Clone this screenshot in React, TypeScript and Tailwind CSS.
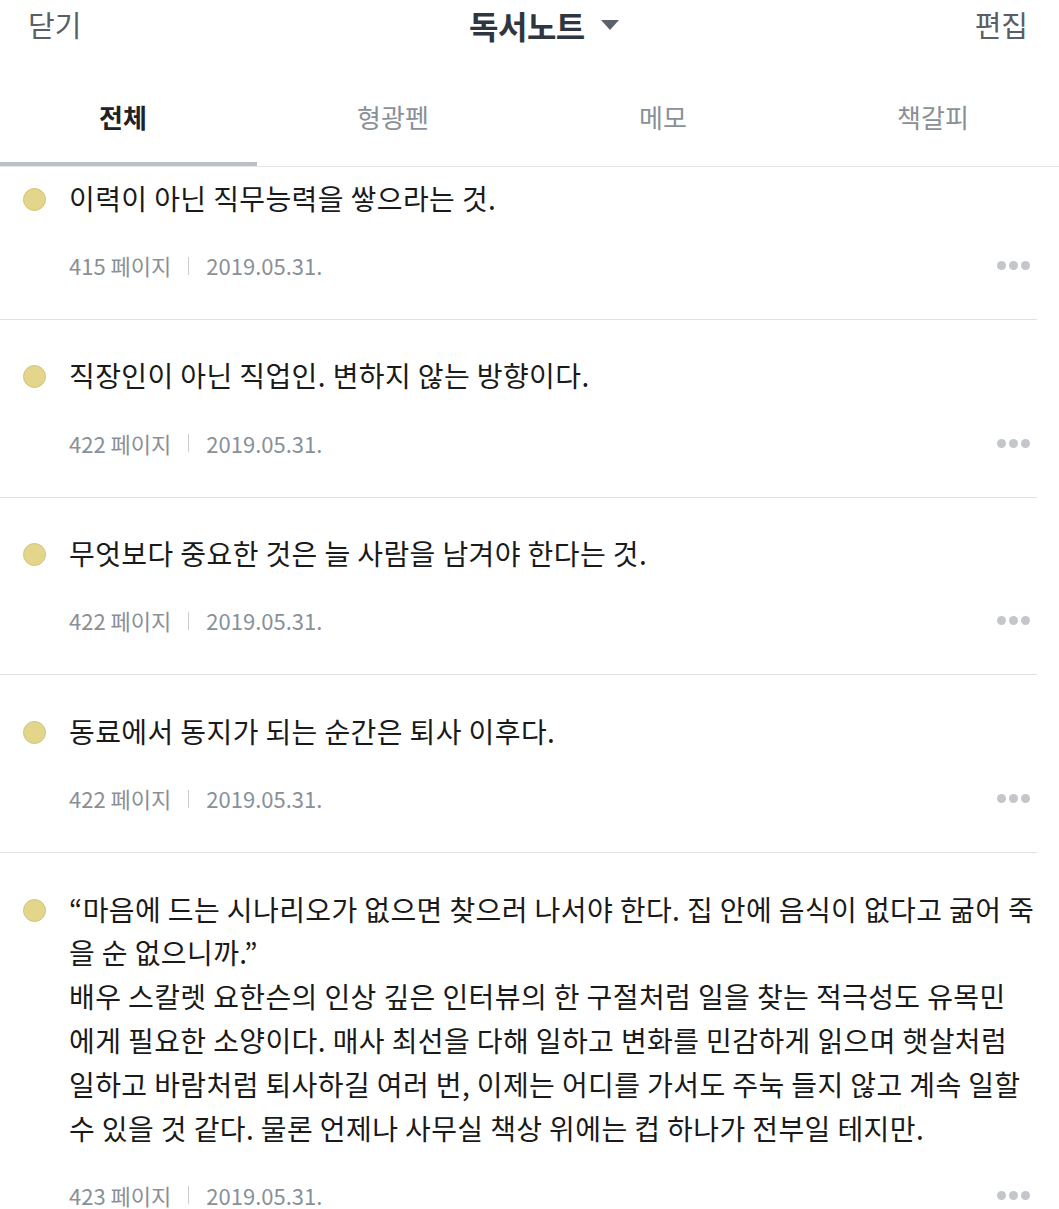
import React from 'react';

const FONT = { fontFamily: '"Noto Sans CJK KR", "Noto Sans", sans-serif' };

type Note = {
  id: number;
  lines: string[];
  page: number;
  date: string;
};

const notes: Note[] = [
  { id: 1, lines: ['이력이 아닌 직무능력을 쌓으라는 것.'], page: 415, date: '2019.05.31.' },
  { id: 2, lines: ['직장인이 아닌 직업인. 변하지 않는 방향이다.'], page: 422, date: '2019.05.31.' },
  { id: 3, lines: ['무엇보다 중요한 것은 늘 사람을 남겨야 한다는 것.'], page: 422, date: '2019.05.31.' },
  { id: 4, lines: ['동료에서 동지가 되는 순간은 퇴사 이후다.'], page: 422, date: '2019.05.31.' },
  {
    id: 5,
    lines: [
      '“마음에 드는 시나리오가 없으면 찾으러 나서야 한다. 집 안에 음식이 없다고 굶어 죽',
      '을 순 없으니까.”',
      '배우 스칼렛 요한슨의 인상 깊은 인터뷰의 한 구절처럼 일을 찾는 적극성도 유목민',
      '에게 필요한 소양이다. 매사 최선을 다해 일하고 변화를 민감하게 읽으며 햇살처럼',
      '일하고 바람처럼 퇴사하길 여러 번, 이제는 어디를 가서도 주눅 들지 않고 계속 일할',
      '수 있을 것 같다. 물론 언제나 사무실 책상 위에는 컵 하나가 전부일 테지만.',
    ],
    page: 423,
    date: '2019.05.31.',
  },
];

const tabs = ['전체', '형광펜', '메모', '책갈피'];

const NoteRow = ({ note, first, last }: { note: Note; first: boolean; last: boolean }) => (
  <div className={`${first ? 'pt-[10px] pb-[38px]' : 'pt-[34.5px] pb-[38.5px]'} ${last ? '' : 'border-b border-[#dde1e3]'} mr-[22px]`}>
    <div className="flex">
      <div className="w-[69px] shrink-0 flex justify-start pl-[23px] pt-[11px]">
        <span className="block w-[23px] h-[23px] rounded-full bg-[#e3d68a] border border-[#d3c472]" />
      </div>
      <div className="flex-1 text-[28px] leading-[43.8px] text-[#1a1a1a] whitespace-nowrap tracking-[0.4px]">
        {note.lines.map((l, i) => (
          <div key={i}>{l}</div>
        ))}
      </div>
    </div>
    <div className="flex items-center pl-[69px] mt-[30px] h-[30px] text-[22px] text-[#8a9097]">
      <span>{note.page} 페이지</span>
      <span className="mx-[17px] w-px h-[18px] bg-[#c9cdd1]" />
      <span>{note.date}</span>
      <span className="ml-auto flex gap-[3px] mr-[7px]">
        <span className="w-[9px] h-[9px] rounded-full bg-[#c3c7cb]" />
        <span className="w-[9px] h-[9px] rounded-full bg-[#c3c7cb]" />
        <span className="w-[9px] h-[9px] rounded-full bg-[#c3c7cb]" />
      </span>
    </div>
  </div>
);

const App = () => {
  return (
    <div className="w-[1059px] h-[1209px] bg-white overflow-hidden" style={FONT}>
      {/* Header */}
      <div className="relative flex items-center justify-between h-[50px] px-[28px]">
        <span className="text-[29px] text-[#5a5f65]">닫기</span>
        <div className="absolute left-[469px] top-0 h-full flex items-center">
          <span className="text-[32px] font-bold text-[#2e3640] tracking-[-0.5px]">독서노트</span>
        </div>
        <span className="absolute left-[601px] top-[20px] w-0 h-0 border-l-[9px] border-r-[9px] border-t-[10px] border-l-transparent border-r-transparent border-t-[#5b6168]" />
        <span className="text-[29px] text-[#5a5f65] mr-[3px]">편집</span>
      </div>

      {/* Tabs */}
      <div className="relative h-[117px] border-b border-[#e3e5e7] overflow-hidden">
        <div className="flex ml-[-12px] h-full">
          {tabs.map((t, i) => (
            <div
              key={t}
              className={`w-[270px] shrink-0 flex items-center justify-center pt-[16px] text-[26px] ${i === 0 ? 'font-bold text-[#222]' : 'text-[#8a9097]'}`}
            >
              {t}
            </div>
          ))}
        </div>
        <div className="absolute left-0 bottom-0 w-[257px] h-[4px] bg-[#bcc0c3]" />
      </div>

      {/* List */}
      <div>
        {notes.map((n, i) => (
          <NoteRow key={n.id} note={n} first={i === 0} last={i === notes.length - 1} />
        ))}
      </div>
    </div>
  );
};

export default App;
